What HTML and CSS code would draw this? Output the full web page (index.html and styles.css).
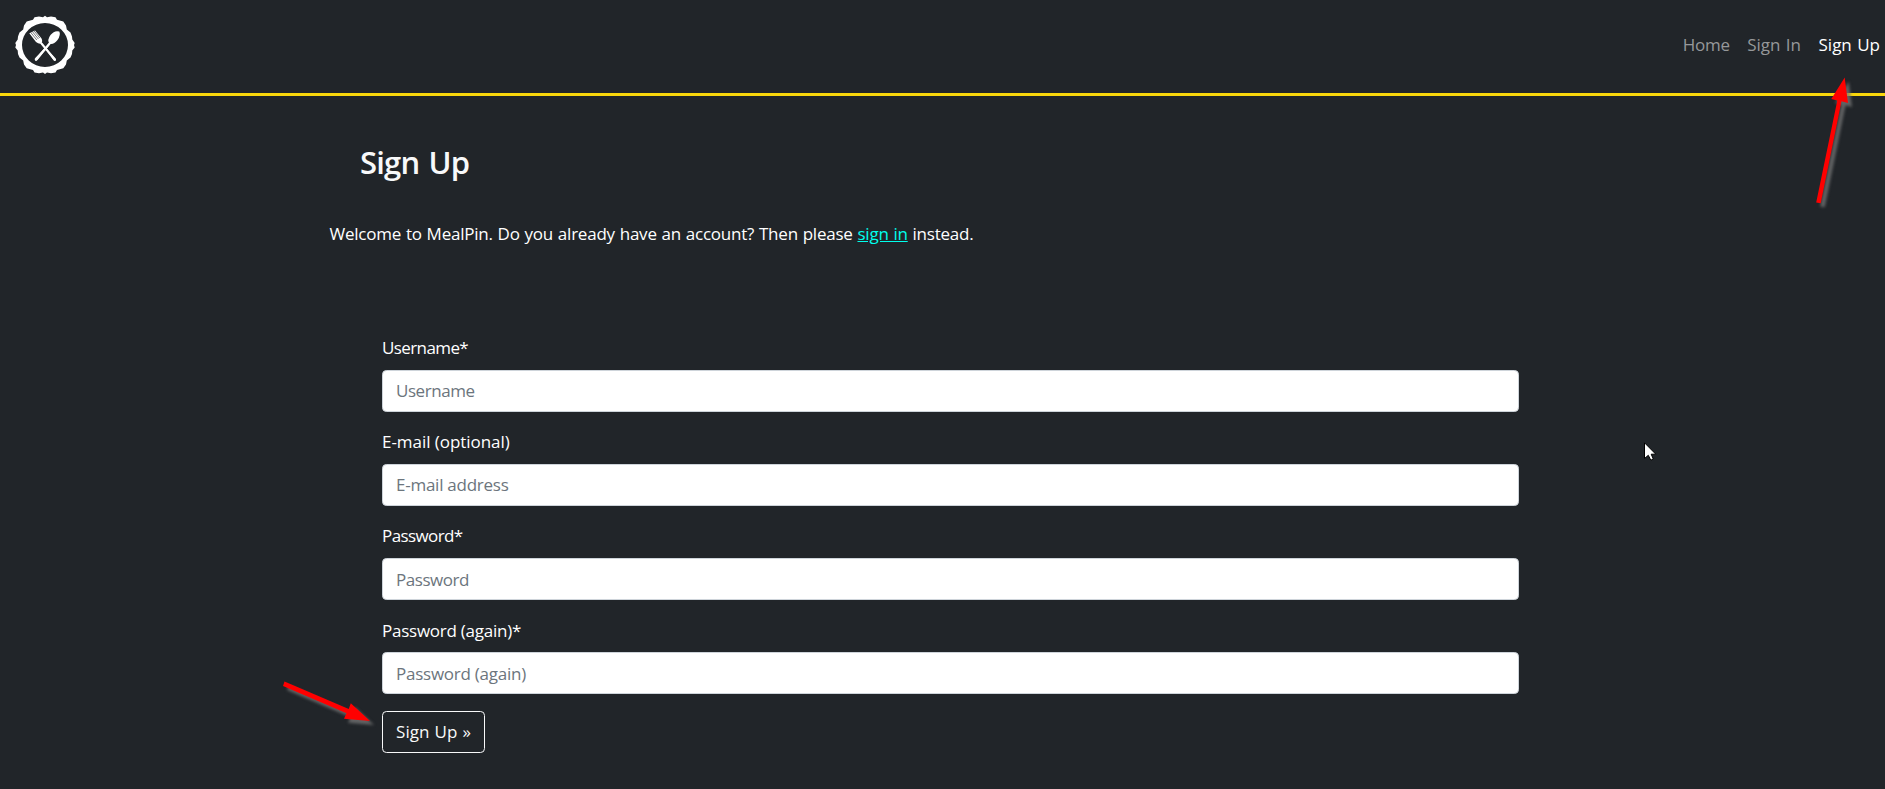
FILE: index.html
```html
<!DOCTYPE html>
<html lang="en">
<head>
<meta charset="utf-8">
<title>MealPin - Sign Up</title>
<link rel="stylesheet" href="styles.css">
</head>
<body>
<header class="navbar">
  <a class="brand" aria-label="MealPin">
    <svg width="60" height="60" viewBox="0 0 60 60">
      <path fill="#fff" fill-rule="evenodd" d="M30 .8 32 2.300 36 1.600 40.500 2.200 42 4.800 48.300 6.600 51 10.500 51.800 14.500 55.500 17.500 57 21.500 57.300 24.500 59.700 28 59 30 59.700 32.500 57.300 35.500 57 39 55.500 42.500 51.800 45.500 51 49.500 48.300 53.200 42 55 40.500 57.500 36 58.200 32 57.500 30 59 28 57.500 24 58.200 19.500 57.500 18 55 11.700 53.200 9 49.500 8.200 45.500 4.500 42.500 3 39 2.700 35.500 .3 32.500 1 30 .3 28 2.700 24.500 3 21.500 4.500 17.500 8.200 14.500 9 10.500 11.700 6.600 18 4.800 19.500 2.200 24 1.600 28 2.300ZM30 8A23 22 0 1 0 30 52 23 22 0 1 0 30 8Z"/>
      <path fill="#fff" d="M14.300 18.200Q18 23 21 27Q24 29.500 26.500 28.500L38.500 45.300Q40 46.500 41 45.300 41.500 44 40 42.800L26.700 28Q28 25 25.800 22.500L20 15.400Z"/>
      <path stroke="#212529" stroke-width=".6" d="M15.800 17.500 21.800 25M17.300 16.500 23.400 24M18.800 15.600 24.800 23"/>
      <path stroke="#fff" stroke-width="2" stroke-linecap="round" d="M26.500 28.500 39.700 44.700M34.500 28.500 21.200 44.700"/>
      <path fill="#fff" d="M44.300 16.500Q39.500 15 35.500 20 32 25 34.200 28.200L20.500 42.800Q19 44.200 20 45.300 21 46.500 22.500 45L35.500 29Q39 29.500 42.500 25 46 20 44.300 16.500Z"/>
    </svg>
  </a>
  <nav class="nav">
    <a class="nav-link home">Home</a>
    <a class="nav-link">Sign In</a>
    <a class="nav-link active">Sign Up</a>
  </nav>
</header>
<main class="content">
  <h2 class="title">Sign Up</h2>
  <p class="intro">Welcome to MealPin. Do you already have an account? Then please <a class="link">sign in</a> instead.</p>
  <form class="form">
    <label class="label tight" for="user">Username*</label>
    <input class="input" id="user" type="text" placeholder="Username">
    <label class="label wide" for="mail">E-mail (optional)</label>
    <input class="input loose" id="mail" type="email" placeholder="E-mail address">
    <label class="label tight" for="pw1">Password*</label>
    <input class="input" id="pw1" type="password" placeholder="Password">
    <label class="label loose" for="pw2">Password (again)*</label>
    <input class="input loose last" id="pw2" type="password" placeholder="Password (again)">
    <button class="button" type="button">Sign Up »</button>
  </form>
</main>
<svg class="overlay" width="1885" height="789" viewBox="0 0 1885 789">
  <g class="arrow" fill="#f00">
    <path d="M1844.700 77.500 1848 103 1841.500 101.300 1820.700 203.300 1816.200 202.500 1837.300 100.500 1831.300 99Z"/>
    <path d="M370 721 344 718.800 346.500 713.300 283 686 284.500 681.500 348.700 709 350.800 703.300Z"/>
  </g>
  <path fill="#fff" stroke="#000" stroke-width="1" d="M1644.500 442.800V458.500L1648.300 455.300 1650.800 460.200 1653.300 459 1651.200 454.200H1655.800Z"/>
</svg>
</body>
</html>
```
FILE: styles.css
```css
* { box-sizing: border-box; }

body {
  margin: 0;
  height: 789px;
  overflow: hidden;
  background: #212529;
  color: #fff;
  font-family: "Open Sans", "Noto Sans", sans-serif;
  font-size: 17px;
  line-height: 26px;
  letter-spacing: -0.4px;
}

.navbar {
  display: flex;
  justify-content: space-between;
  align-items: flex-start;
  height: 96px;
  padding: 15px 5px 0 15px;
  border-bottom: 3px solid #f9d70b;
}

.brand svg { display: block; }

.nav {
  display: flex;
  gap: 17.5px;
  padding-top: 17px;
  letter-spacing: 0;
  word-spacing: 1px;
}

.nav-link { color: #96989a; }
.nav-link.active { color: #fff; }
.nav-link.home { letter-spacing: -0.3px; }

.content { padding: 0 329.5px; }

.title {
  margin: 0;
  padding: 45px 0 0 30.5px;
  font-size: 31px;
  line-height: 42px;
  font-weight: 600;
  letter-spacing: -0.8px;
  word-spacing: 2px;
  color: #f8f9fa;
}

.intro {
  margin: 38px 0 0;
  letter-spacing: -0.22px;
  word-spacing: 0.6px;
}

.link {
  color: #00ffec;
  text-decoration: underline;
}

.form {
  display: flex;
  flex-direction: column;
  width: 1137px;
  margin: 88px 0 0 52.5px;
}

.label { margin-bottom: 8.7px; }

.input {
  height: 42px;
  margin: 0 0 17.5px;
  padding: 0 13px;
  border: 1px solid #ced4da;
  border-radius: 4.4px;
  background: #fff;
  font: inherit;
  letter-spacing: -0.45px;
}

.input.last { margin-bottom: 17px; }

.tight { letter-spacing: -0.6px; }
.loose { letter-spacing: -0.25px; }
.wide { letter-spacing: -0.05px; }

.input::placeholder {
  color: #6c757d;
  opacity: 1;
}

.button {
  width: 103px;
  height: 42px;
  padding: 0 0 1px;
  border: 1px solid #f8f9fa;
  border-radius: 4.4px;
  background: transparent;
  color: #f8f9fa;
  font: inherit;
  letter-spacing: 0.05px;
  word-spacing: 0.5px;
}

.overlay {
  position: absolute;
  inset: 0;
  pointer-events: none;
}

.arrow { filter: drop-shadow(4px 4px 1.5px rgba(120, 120, 120, .75)); }
```
